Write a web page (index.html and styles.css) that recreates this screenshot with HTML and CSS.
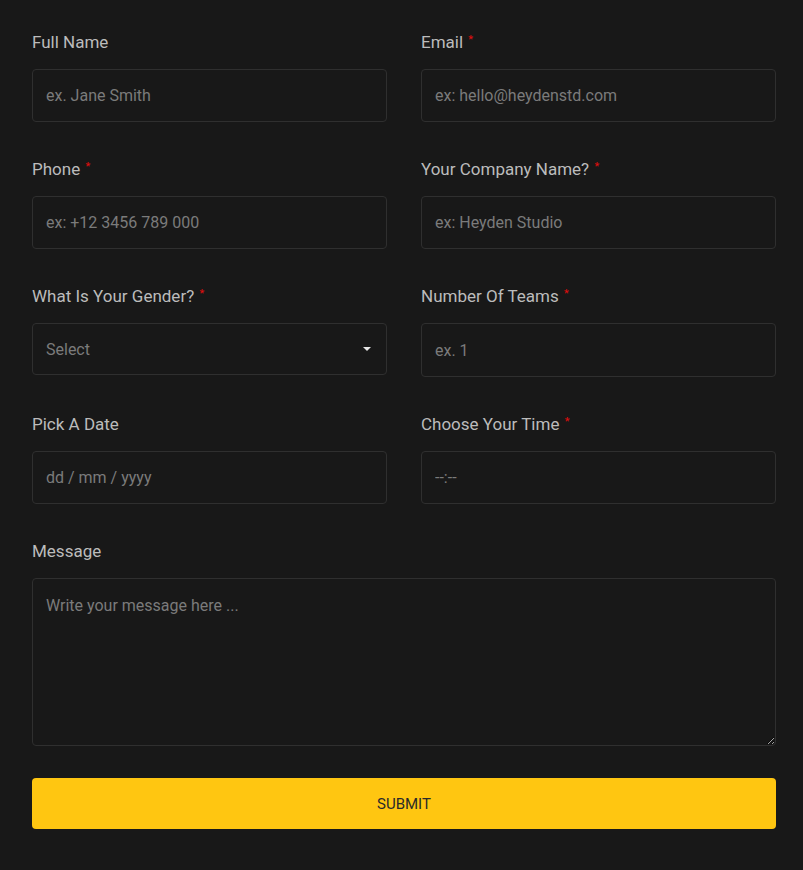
FILE: index.html
```html
<!DOCTYPE html>
<html lang="en">
<head>
    <meta charset="UTF-8">
    <meta name="viewport" content="width=device-width, initial-scale=1.0">
    <title>Contact Form</title>
    <link rel="stylesheet" href="styles.css">
</head>
<body>
    <form class="contact-form">
        <div class="field">
            <label for="fullName">Full Name</label>
            <input type="text" id="fullName" placeholder="ex. Jane Smith">
        </div>
        <div class="field">
            <label for="email">Email <span class="req">*</span></label>
            <input type="email" id="email" placeholder="ex: hello@heydenstd.com">
        </div>
        <div class="field">
            <label for="phone">Phone <span class="req">*</span></label>
            <input type="tel" id="phone" placeholder="ex: +12 3456 789 000">
        </div>
        <div class="field">
            <label for="company">Your Company Name? <span class="req">*</span></label>
            <input type="text" id="company" placeholder="ex: Heyden Studio">
        </div>
        <div class="field">
            <label for="gender">What Is Your Gender? <span class="req">*</span></label>
            <div class="select-wrap">
                <select id="gender">
                    <option>Select</option>
                    <option>Female</option>
                    <option>Male</option>
                    <option>Other</option>
                </select>
            </div>
        </div>
        <div class="field">
            <label for="teams">Number Of Teams <span class="req">*</span></label>
            <input type="text" id="teams" class="tall" placeholder="ex. 1">
        </div>
        <div class="field">
            <label for="date">Pick A Date</label>
            <input type="text" id="date" placeholder="dd / mm / yyyy">
        </div>
        <div class="field">
            <label for="time">Choose Your Time <span class="req">*</span></label>
            <input type="text" id="time" placeholder="--:--">
        </div>
        <div class="field full">
            <label for="message">Message</label>
            <textarea id="message" placeholder="Write your message here ..."></textarea>
        </div>
        <button type="submit" class="submit">Submit</button>
    </form>
</body>
</html>
```

FILE: styles.css
```css
body {
    margin: 0;
    padding: 30px 27px 40px 32px;
    background-color: #181818;
    font-family: Roboto, "Liberation Sans", sans-serif;
    color: #bdbdbd;
}

.contact-form {
    display: grid;
    grid-template-columns: 1fr 1fr;
    column-gap: 34px;
    row-gap: 35px;
    width: 744px;
    align-items: start;
}

.field {
    display: flex;
    flex-direction: column;
}

.field.full {
    grid-column: 1 / -1;
}

.field label {
    height: 24px;
    font-size: 17px;
    font-weight: 400;
    line-height: 24px;
    margin-bottom: 15px;
    color: #bcbcbc;
}

.req {
    color: #e30d0d;
    font-size: 11px;
    line-height: 0;
    vertical-align: 5px;
    margin-left: 1px;
}

.field input,
.field select,
.field textarea {
    box-sizing: border-box;
    width: 100%;
    height: 53px;
    padding: 0 13px;
    background-color: #181818;
    border: 1px solid #2f2f2f;
    border-radius: 4px;
    font-family: inherit;
    font-size: 16px;
    color: #cfcfcf;
    outline: none;
}

.field input.tall {
    height: 54px;
}

.field input::placeholder,
.field textarea::placeholder {
    color: #7b7b7b;
}

.select-wrap {
    position: relative;
}

.field select {
    appearance: none;
    -webkit-appearance: none;
    height: 52px;
    color: #7b7b7b;
}

.select-wrap::after {
    content: "";
    position: absolute;
    right: 16px;
    top: 24px;
    border-left: 4px solid transparent;
    border-right: 4px solid transparent;
    border-top: 4px solid #e6e6e6;
    pointer-events: none;
}

.field textarea {
    height: 168px;
    padding: 16px 13px;
    line-height: 22px;
    resize: vertical;
}

.submit {
    grid-column: 1 / -1;
    margin-top: -3px;
    height: 51px;
    background-color: #ffc611;
    border: none;
    border-radius: 4px;
    font-family: inherit;
    font-size: 15px;
    font-weight: 400;
    text-transform: uppercase;
    color: #2a2a2a;
    cursor: pointer;
}

.submit:hover {
    background-color: #f0b800;
}
```
